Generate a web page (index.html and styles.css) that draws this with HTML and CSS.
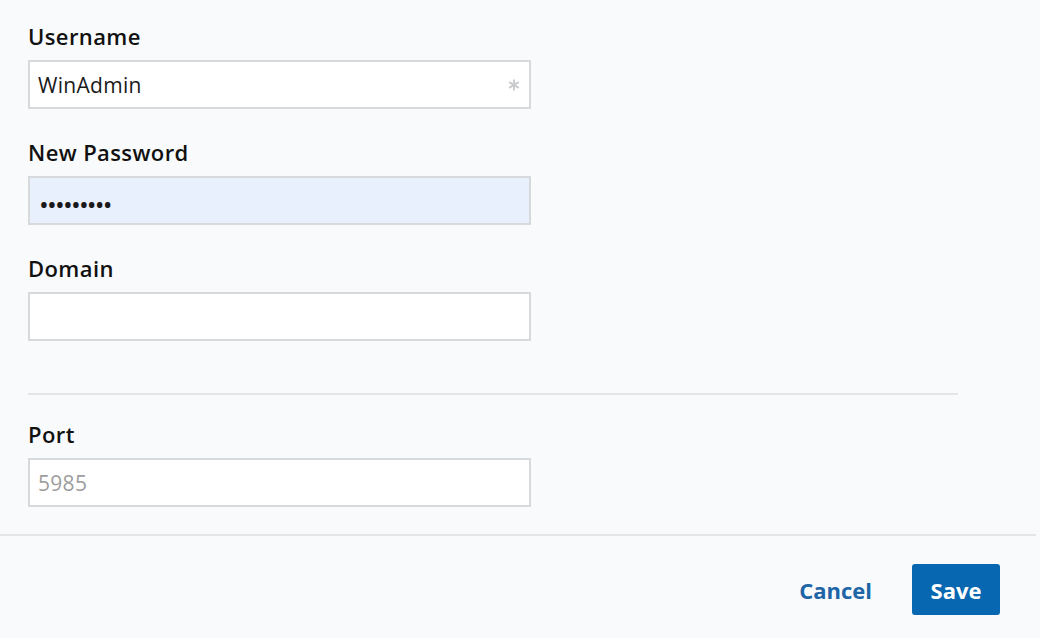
FILE: index.html
```html
<!DOCTYPE html>
<html lang="en">
<head>
<meta charset="utf-8">
<title>Credentials</title>
<link rel="stylesheet" href="styles.css">
</head>
<body>
<div class="dialog">
  <form class="form">
    <div class="field">
      <label class="label" for="username">Username</label>
      <div class="input-wrap">
        <input class="input" id="username" type="text" value="WinAdmin">
        <svg class="req" viewBox="0 0 12 12" width="12" height="12" aria-hidden="true">
          <g stroke="#c9cbce" stroke-width="2" stroke-linecap="butt">
            <line x1="6" y1="0.5" x2="6" y2="11.5"/>
            <line x1="1.2" y1="3.2" x2="10.8" y2="8.8"/>
            <line x1="1.2" y1="8.8" x2="10.8" y2="3.2"/>
          </g>
        </svg>
      </div>
    </div>
    <div class="field">
      <label class="label" for="password">New Password</label>
      <input class="input input-autofill" id="password" type="password" value="secret123">
    </div>
    <div class="field">
      <label class="label" for="domain">Domain</label>
      <input class="input" id="domain" type="text" value="">
    </div>
    <hr class="divider">
    <div class="field">
      <label class="label" for="port">Port</label>
      <input class="input" id="port" type="text" placeholder="5985">
    </div>
  </form>
  <div class="footer">
    <button class="btn btn-link" type="button">Cancel</button>
    <button class="btn btn-primary" type="button">Save</button>
  </div>
</div>
</body>
</html>
```
FILE: styles.css
```css
* { box-sizing: border-box; }

html, body {
  margin: 0;
  padding: 0;
  background: #f9fafb;
}

body {
  font-family: "Open Sans", "Noto Sans", sans-serif;
  color: #151515;
  width: 1040px;
  height: 638px;
  overflow: hidden;
}

.dialog {
  width: 1036px;
  display: flex;
  flex-direction: column;
}

.form {
  padding: 23px 78px 27px 28px;
  display: flex;
  flex-direction: column;
}

.field {
  display: flex;
  flex-direction: column;
  gap: 11px;
  margin-bottom: 30px;
}

.field:last-child { margin-bottom: 0; }

.label {
  font-size: 22px;
  line-height: 26px;
  font-weight: 600;
  letter-spacing: 0.4px;
  color: #111111;
}

.input-wrap {
  position: relative;
  width: 503px;
}

.input {
  width: 503px;
  height: 49px;
  border: 2px solid #d7dadd;
  border-radius: 0;
  background: #ffffff;
  padding: 0 8px;
  font-family: inherit;
  font-size: 21px;
  letter-spacing: 0.3px;
  color: #1a1a1a;
  outline: none;
}

.input::placeholder { color: #9d9d9d; }

.input-autofill {
  background: #e8f0fe;
  font-size: 26px;
  letter-spacing: -1.8px;
  padding: 6px 0 0 9px;
}

.req {
  position: absolute;
  right: 11px;
  top: 19px;
}

.divider {
  border: 0;
  border-top: 2px solid #e3e5e8;
  margin: 22px 0 26px;
  width: 930px;
}

.footer {
  border-top: 2px solid #e3e5e8;
  display: flex;
  justify-content: flex-end;
  align-items: center;
  gap: 24px;
  padding: 28px 36px 0 0;
}

.btn {
  font-family: inherit;
  font-size: 22px;
  font-weight: 700;
  border: 0;
  cursor: pointer;
}

.btn-link {
  background: transparent;
  color: #1d65a7;
  padding: 0 16px;
  height: 51px;
}

.btn-primary {
  background: #0767b1;
  color: #ffffff;
  width: 88px;
  height: 51px;
  border-radius: 3px;
}
```
